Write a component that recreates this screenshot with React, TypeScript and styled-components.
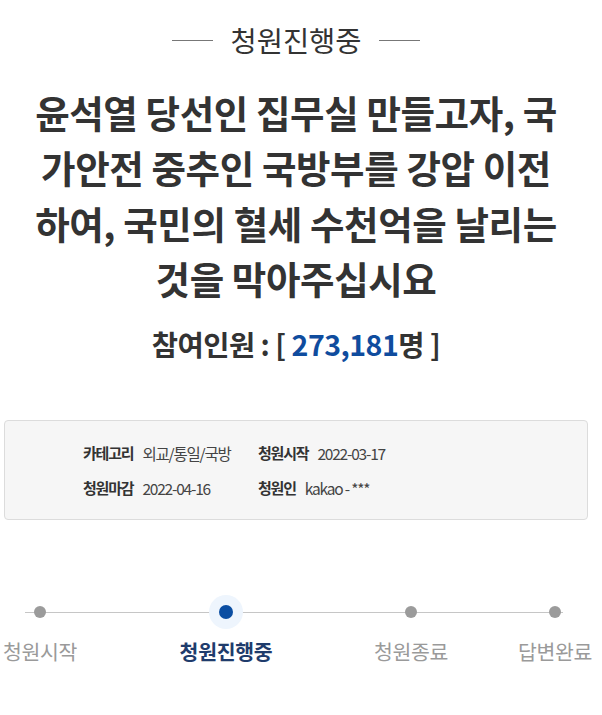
import React from "react";
import styled, { createGlobalStyle } from "styled-components";

const Global = createGlobalStyle`
  html, body { margin: 0; padding: 0; background: #fff; }
  body { font-family: "Noto Sans CJK KR", "Noto Sans", sans-serif; color: #333; }
  * { box-sizing: border-box; }
`;

const Page = styled.div`
  width: 592px;
  padding-top: 25px;
  padding-bottom: 40px;
`;

const Status = styled.div`
  display: flex;
  align-items: center;
  justify-content: center;
  gap: 17px;
  height: 30px;
  font-size: 28.5px;
  line-height: 30px;
  color: #333;
  letter-spacing: 0;
  &::before, &::after {
    content: "";
    width: 41px;
    height: 1px;
    background: #777;
  }
`;

const Title = styled.h1`
  margin: 29px 0 0;
  text-align: center;
  font-size: 37.5px;
  line-height: 55.3px;
  font-weight: 700;
  color: #333;
  letter-spacing: -0.4px;
`;

const Count = styled.p`
  margin: 22px 0 0;
  text-align: center;
  font-size: 28.5px;
  line-height: 34px;
  font-weight: 700;
  color: #333;
  letter-spacing: -0.5px;
`;

const Num = styled.span`
  color: #0f4c9e;
`;

const InfoBox = styled.div`
  margin: 59px 0 0 4px;
  width: 584px;
  height: 100px;
  border: 1px solid #dcdcdc;
  border-radius: 4px;
  background: #f6f6f6;
  padding: 14px 0 0 78px;
  display: grid;
  grid-template-columns: 175px 175px;
  grid-auto-rows: 35px;
`;

const InfoItem = styled.div`
  display: flex;
  align-items: center;
  gap: 9px;
  letter-spacing: -1.2px;
  white-space: nowrap;
`;

const InfoLabel = styled.span`
  font-size: 15px;
  font-weight: 700;
  color: #333;
`;

const InfoValue = styled.span`
  font-size: 15.5px;
  font-weight: 400;
  color: #444;
`;

const Steps = styled.div`
  position: relative;
  margin-top: 75px;
  display: flex;
  &::before {
    content: "";
    position: absolute;
    top: 17px;
    left: 25px;
    width: 538px;
    height: 1px;
    background: #c6c6c6;
  }
`;

const Step = styled.div<{ $gap: number }>`
  position: relative;
  flex: none;
  width: 80px;
  margin-left: ${(p) => p.$gap}px;
  display: flex;
  flex-direction: column;
  align-items: center;
`;

const DotWrap = styled.div<{ $active?: boolean }>`
  width: 34px;
  height: 34px;
  border-radius: 50%;
  background: ${(p) => (p.$active ? "#eef5fd" : "transparent")};
  display: flex;
  align-items: center;
  justify-content: center;
`;

const Dot = styled.span<{ $active?: boolean }>`
  width: ${(p) => (p.$active ? 14 : 12)}px;
  height: ${(p) => (p.$active ? 14 : 12)}px;
  border-radius: 50%;
  background: ${(p) => (p.$active ? "#0b4ea2" : "#9b9b9b")};
`;

const StepLabel = styled.span<{ $active?: boolean }>`
  margin-top: 9px;
  white-space: nowrap;
  font-size: 20.5px;
  line-height: 26px;
  font-weight: ${(p) => (p.$active ? 700 : 400)};
  color: ${(p) => (p.$active ? "#1f3c6c" : "#9a9a9a")};
  letter-spacing: -0.3px;
`;

const steps = [
  { label: "청원시작", gap: 0 },
  { label: "청원진행중", gap: 106, active: true },
  { label: "청원종료", gap: 105 },
  { label: "답변완료", gap: 64 },
];

const titleLines = [
  "윤석열 당선인 집무실 만들고자, 국",
  "가안전 중추인 국방부를 강압 이전",
  "하여, 국민의 혈세 수천억을 날리는",
  "것을 막아주십시요",
];

export default function App() {
  return (
    <Page>
      <Global />
      <Status>청원진행중</Status>
      <Title>
        {titleLines.map((line, i) => (
          <React.Fragment key={i}>
            {line}
            {i < titleLines.length - 1 && <br />}
          </React.Fragment>
        ))}
      </Title>
      <Count>
        참여인원 : [ <Num>273,181</Num>명 ]
      </Count>
      <InfoBox>
        <InfoItem>
          <InfoLabel>카테고리</InfoLabel>
          <InfoValue>외교/통일/국방</InfoValue>
        </InfoItem>
        <InfoItem>
          <InfoLabel>청원시작</InfoLabel>
          <InfoValue>2022-03-17</InfoValue>
        </InfoItem>
        <InfoItem>
          <InfoLabel>청원마감</InfoLabel>
          <InfoValue>2022-04-16</InfoValue>
        </InfoItem>
        <InfoItem>
          <InfoLabel>청원인</InfoLabel>
          <InfoValue>kakao - ***</InfoValue>
        </InfoItem>
      </InfoBox>
      <Steps>
        {steps.map((s) => (
          <Step key={s.label} $gap={s.gap}>
            <DotWrap $active={s.active}>
              <Dot $active={s.active} />
            </DotWrap>
            <StepLabel $active={s.active}>{s.label}</StepLabel>
          </Step>
        ))}
      </Steps>
    </Page>
  );
}
